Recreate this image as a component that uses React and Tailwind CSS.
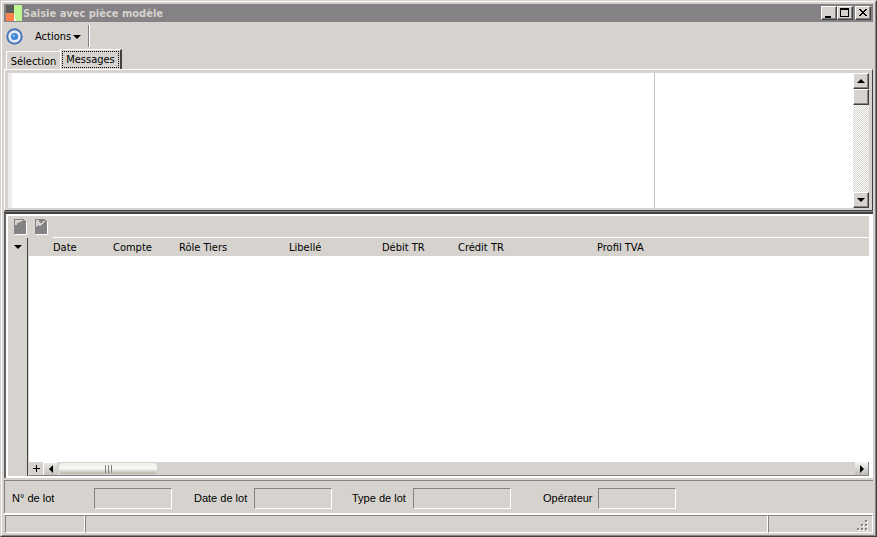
import React, { useState } from 'react';
import clsx from 'clsx';

const tabs = ['Sélection', 'Messages'];

const columns = [
  { label: 'Date', width: 'w-[60px]' },
  { label: 'Compte', width: 'w-[66px]' },
  { label: 'Rôle Tiers', width: 'w-[110px]' },
  { label: 'Libellé', width: 'w-[93px]' },
  { label: 'Débit TR', width: 'w-[76px]' },
  { label: 'Crédit TR', width: 'w-[139px]' },
  { label: 'Profil TVA', width: 'w-auto' },
];

const fields = [
  { id: 'lot', label: 'N° de lot', labelWidth: 'w-[82px]', width: 'w-[78px]' },
  { id: 'date', label: 'Date de lot', labelWidth: 'w-[60px]', width: 'w-[78px]' },
  { id: 'type', label: 'Type de lot', labelWidth: 'w-[61px]', width: 'w-[98px]' },
  { id: 'operateur', label: 'Opérateur', labelWidth: 'w-[55px]', width: 'w-[78px]' },
];

const fieldGaps = ['', 'ml-[22px]', 'ml-[20px]', 'ml-[32px]'];

const raised =
  'flex shrink-0 items-center justify-center bg-[#d6d3ce] border border-t-white border-l-white border-r-[#424142] border-b-[#424142] shadow-[inset_-1px_-1px_0_#848284]';

function Triangle({ dir }) {
  const points = {
    up: '0,4 4,0 8,4',
    down: '0,0 8,0 4,4',
    left: '4,0 4,8 0,4',
    right: '0,0 4,4 0,8',
  };
  const vertical = dir === 'up' || dir === 'down';
  return (
    <svg width={vertical ? 8 : 4} height={vertical ? 4 : 8} className="shrink-0">
      <polygon points={points[dir]} fill="#000" />
    </svg>
  );
}

function TitleBar() {
  return (
    <header className="flex h-[18px] items-center bg-[#848284] pr-[2px]">
      <svg width="18" height="18" viewBox="0 0 18 18" shapeRendering="crispEdges" className="shrink-0">
        <rect width="18" height="18" fill="#848284" />
        <rect x="2" y="1" width="8" height="8" fill="#5a5d5a" />
        <rect x="2" y="9" width="8" height="8" fill="#ff8249" />
        <path d="M10 1h8v16h-6l-2-8z" fill="#bdf794" />
        <path d="M10 9l2 8h-2z" fill="#fff" />
      </svg>
      <h1 className="ml-px flex-1 pt-px text-[11px] leading-[18px] font-bold text-[#d6d3ce]">
        Saisie avec pièce modèle
      </h1>
      <button aria-label="Réduire" className={clsx(raised, 'h-[14px] w-[16px]')}>
        <svg width="12" height="10" shapeRendering="crispEdges">
          <rect x="2" y="8" width="6" height="2" />
        </svg>
      </button>
      <button aria-label="Agrandir" className={clsx(raised, 'h-[14px] w-[16px]')}>
        <svg width="12" height="10" shapeRendering="crispEdges">
          <path d="M1 0h9v9h-9zM2 2v6h7v-6z" fillRule="evenodd" />
        </svg>
      </button>
      <button aria-label="Fermer" className={clsx(raised, 'ml-[2px] h-[14px] w-[16px]')}>
        <svg width="12" height="10" shapeRendering="crispEdges">
          <path d="M2 1h2v1h1v1h2v-1h1v-1h2v1h-1v1h-1v1h-1v1h1v1h1v1h1v1h-2v-1h-1v-1h-2v1h-1v1h-2v-1h1v-1h1v-1h1v-1h-1v-1h-1v-1h-1z" />
        </svg>
      </button>
    </header>
  );
}

function Toolbar() {
  return (
    <div className="flex h-[27px] items-center pt-px">
      <svg width="17" height="17" viewBox="0 0 17 17" className="ml-[2px] shrink-0">
        <circle cx="8.500" cy="8.500" r="7.200" fill="#e4eaf4" stroke="#4a75b8" strokeWidth="2" />
        <circle cx="8.500" cy="8.500" r="3.600" fill="#3f86d8" />
        <circle cx="7.800" cy="7.800" r="1.400" fill="#7fb8f0" />
      </svg>
      <button className="ml-3 flex items-center gap-[2px] pt-px text-[11px] leading-[14px]">
        Actions
        <Triangle dir="down" />
      </button>
      <div className="ml-[7px] h-[22px] w-[2px] border-l border-r border-l-[#848284] border-r-white" />
    </div>
  );
}

function Tabs({ active, onChange }) {
  return (
    <div role="tablist" className="flex h-[20px] items-end pl-[2px]">
      {tabs.map((tab) => (
        <button
          key={tab}
          role="tab"
          aria-selected={active === tab}
          onClick={() => onChange(tab)}
          className={clsx(
            'flex items-center justify-center border-t border-l border-white text-[11px] leading-[14px]',
            active === tab
              ? 'h-[20px] w-[62px] border-r-2 border-r-[#424142]'
              : 'h-[18px] w-[54px] pt-[2px]',
          )}
        >
          {active === tab ? (
            <span className="flex h-[17px] w-[57px] items-center justify-center border border-dotted border-black pt-px">
              {tab}
            </span>
          ) : (
            tab
          )}
        </button>
      ))}
    </div>
  );
}

function MessagePanel() {
  return (
    <section className="flex h-[142px] shrink-0 border-t border-r border-b border-l border-t-white border-r-[#424142] border-b-[#424142] border-l-white pt-[3px] pr-[3px] pb-[2px] pl-[3px]">
      <div className="w-1 bg-[#efebef]" />
      <div className="flex-[642] border-r border-[#c6c3c6] bg-white" />
      <div className="flex-[198] bg-white" />
      <div className="flex w-4 flex-col bg-[repeating-conic-gradient(#d6d3ce_0_25%,#fff_0_50%)] bg-[length:2px_2px]">
        <button aria-label="Défiler vers le haut" className={clsx(raised, 'h-4 w-4')}>
          <Triangle dir="up" />
        </button>
        <div className={clsx(raised, 'h-4 w-4')} />
        <div className="flex-1" />
        <button aria-label="Défiler vers le bas" className={clsx(raised, 'h-4 w-4')}>
          <Triangle dir="down" />
        </button>
      </div>
    </section>
  );
}

function DocumentIcon({ mark }) {
  return (
    <svg width="14" height="16" viewBox="0 0 14 16" shapeRendering="crispEdges">
      <path d="M1 1h10v2h2v13h-12z" fill="#fff" />
      <path d="M0 0h10v1h1v1h1v13h-12z" fill="#848284" />
      <path d={mark} fill="#d6d3ce" />
    </svg>
  );
}

function EntryGrid() {
  return (
    <section className="flex flex-1 flex-col border-t border-[#848284]">
      <div className="flex flex-1 flex-col border-t-2 border-l-2 border-t-[#424142] border-l-[#636163]">
        <div className="flex flex-1 flex-col border-2 border-r-4 border-white">
          <div className="flex flex-1 bg-[#d6d3ce]">
            <div className="flex w-[19px] flex-col">
              <button aria-label="Nouvelle pièce" className="mt-[3px] ml-[6px] h-4 w-[14px]">
                <DocumentIcon mark="M1 1h8v1h-2v1h-2v1h-2v2h-2z" />
              </button>
              <button aria-label="Options de la grille" className="mt-[3px] flex h-[18px] items-center justify-center">
                <Triangle dir="down" />
              </button>
            </div>
            <div className="flex min-w-0 flex-1 flex-col">
              <div className="flex h-[21px] pt-[3px] pl-2">
                <button aria-label="Supprimer la pièce" className="h-4 w-[14px]">
                  <DocumentIcon mark="M1 1h3v2h1v1h2v-1h1v-1h2v1h-1v1h-1v1h-1v1h-1v1h-2v-1h-1v1h-1v1h-1z" />
                </button>
              </div>
              <div className="ml-[26px] h-px bg-white" />
              <div className="flex flex-1 flex-col border-l border-[#424142]">
                <div className="ml-px flex flex-1 flex-col bg-white">
                  <table className="w-full table-fixed border-collapse bg-[#d6d3ce] text-left text-[11px]">
                    <thead>
                      <tr className="h-[18px]">
                        <th className="w-[24px]" />
                        {columns.map((col) => (
                          <th key={col.label} className={clsx('px-0 pt-[2px] pb-0 leading-[16px] font-normal', col.width)}>
                            {col.label}
                          </th>
                        ))}
                      </tr>
                    </thead>
                    <tbody />
                  </table>
                  <div className="flex-1" />
                  <div className="flex h-[14px] border-b border-[#848284] bg-[#d6d3ce]">
                    <button aria-label="Ajouter une ligne" className="flex w-[14px] items-center justify-center">
                      <svg width="7" height="7" shapeRendering="crispEdges">
                        <path d="M3 0h1v3h3v1h-3v3h-1v-3h-3v-1h3z" />
                      </svg>
                    </button>
                    <button
                      aria-label="Défiler à gauche"
                      className="flex w-[14px] items-center justify-center border-t border-l border-white bg-linear-to-b from-[#e7e7e7] to-[#c6c3bd]"
                    >
                      <Triangle dir="left" />
                    </button>
                    <div className="flex-1 pt-px pl-[2px]">
                      <div className="flex h-[11px] w-[98px] items-center justify-center gap-[2px] rounded-sm bg-linear-to-b from-[#efefe7] via-[#f7f7f7] to-[#b5b2a5]">
                        <span className="h-2 w-px bg-[#848284]" />
                        <span className="h-2 w-px bg-[#848284]" />
                        <span className="h-2 w-px bg-[#848284]" />
                      </div>
                    </div>
                    <button
                      aria-label="Défiler à droite"
                      className="flex w-[14px] items-center justify-center border-r border-[#848284] bg-linear-to-b from-[#f7f7f7] to-[#bdbab5]"
                    >
                      <Triangle dir="right" />
                    </button>
                  </div>
                </div>
              </div>
            </div>
          </div>
        </div>
      </div>
    </section>
  );
}

function LotFields() {
  return (
    <form className="mt-[2px] flex h-[33px] items-center border-t border-l border-[#848284] pt-[2px] pl-[7px] font-['Liberation_Sans',Arial,sans-serif] text-[11px]">
      {fields.map((field, i) => (
        <div key={field.id} className={clsx('flex items-center', fieldGaps[i])}>
          <label htmlFor={field.id} className={clsx('leading-[14px] whitespace-nowrap', field.labelWidth)}>
            {field.label}
          </label>
          <input
            id={field.id}
            readOnly
            className={clsx(
              'h-[21px] border border-t-[#848284] border-r-white border-b-white border-l-[#848284] bg-[#d6d3ce] px-1 outline-none',
              field.width,
            )}
          />
        </div>
      ))}
    </form>
  );
}

function StatusBar() {
  const pane = 'border border-t-[#848284] border-r-white border-b-white border-l-[#848284]';
  return (
    <footer className="flex h-[20px] border-t-2 border-white pl-px">
      <div className={clsx(pane, 'w-[80px]')} />
      <div className={clsx(pane, 'flex-1')} />
      <div className={clsx(pane, 'flex w-[105px] items-end justify-end pr-[3px]')}>
        <svg width="12" height="12" shapeRendering="crispEdges">
          <path d="M9 1h2v2h-2zM5 5h2v2h-2zM9 5h2v2h-2zM1 9h2v2h-2zM5 9h2v2h-2zM9 9h2v2h-2z" fill="#fff" />
          <path d="M8 0h2v2h-2zM4 4h2v2h-2zM8 4h2v2h-2zM0 8h2v2h-2zM4 8h2v2h-2zM8 8h2v2h-2z" fill="#848284" />
        </svg>
      </div>
    </footer>
  );
}

export default function App() {
  const [activeTab, setActiveTab] = useState('Messages');

  return (
    <main className="flex min-h-screen flex-col border border-[#d6d3ce] border-r-[#424142] border-b-[#424142] bg-[#d6d3ce] font-['DejaVu_Sans_Condensed','DejaVu_Sans',sans-serif] text-black">
      <div className="flex flex-1 flex-col border border-white border-r-[#848284] border-b-[#848284] p-[2px]">
        <TitleBar />
        <Toolbar />
        <Tabs active={activeTab} onChange={setActiveTab} />
        <MessagePanel />
        <EntryGrid />
        <LotFields />
        <StatusBar />
      </div>
    </main>
  );
}
